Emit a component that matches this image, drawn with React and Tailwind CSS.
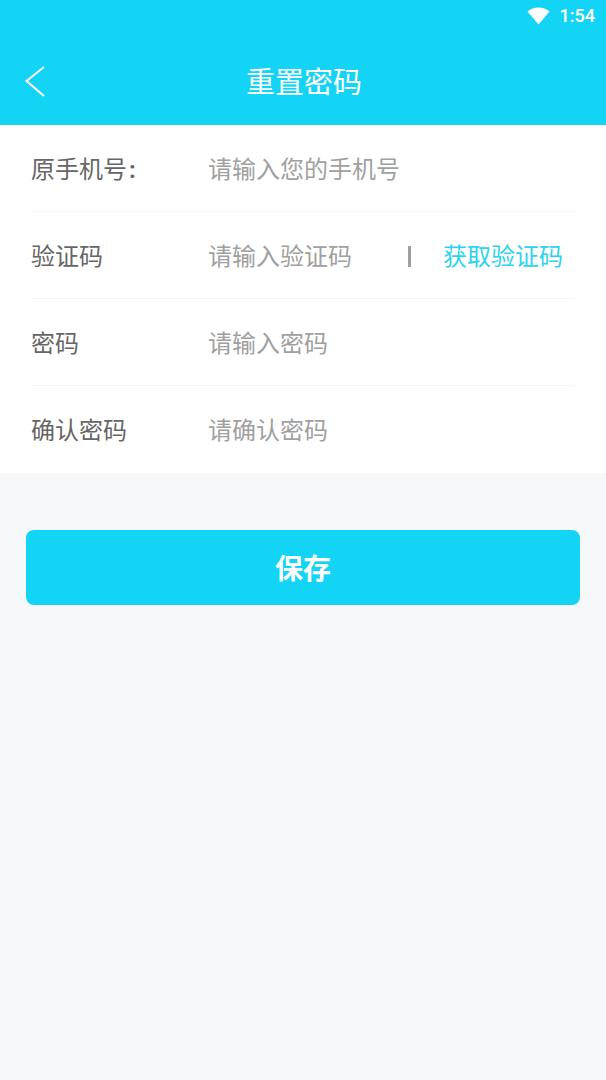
const font = "font-['Roboto','Noto_Sans_CJK_SC',sans-serif]";

function Row({ label, hint, last, children }) {
  return (
    <div className="px-[31px] bg-white">
      <div className={`h-[87px] pt-[3px] flex items-center border-b ${last ? "border-transparent" : "border-[#f5f5f6]"}`}>
        <div className="w-[178px] text-[24px] text-[#666666] leading-none">{label}</div>
        <div className="flex-1 text-[24px] text-[#a0a0a0] leading-none -ml-px">{hint}</div>
        {children}
      </div>
    </div>
  );
}

export default function App() {
  return (
    <div className={`${font} min-h-[1080px] bg-[#f7f8fa]`}>
      <div className="bg-[#13d4f4] h-[125px]">
        <div className="h-[32px] flex items-center justify-end gap-[10px] pr-[11px] text-white">
          <svg className="mb-[1px]" width="23" height="18" viewBox="0 0 23 18">
            <path d="M0.5 4.5 C6.5 -0.8 16.5 -0.8 22.5 4.5 L11.5 17.5 Z" fill="#fff" />
          </svg>
          <span className="text-[18px] font-medium leading-none font-['Roboto',sans-serif]">1:54</span>
        </div>
        <div className="relative h-[93px] pt-[10px] flex items-center justify-center">
          <svg className="absolute left-[24px] top-[33px]" width="22" height="32" viewBox="0 0 22 32" fill="none">
            <path d="M20 2 L2.5 16 L20 31" stroke="#fff" strokeWidth="2" />
          </svg>
          <span className="text-[29px] text-white leading-none ml-[2px]">重置密码</span>
        </div>
      </div>

      <Row label={<>原手机号<span className="ml-[2px] font-bold">:</span></>} hint="请输入您的手机号" />
      <Row label="验证码" hint="请输入验证码">
        <div className="w-[3px] h-[21px] bg-[#a0a0a0]" />
        <div className="ml-[32px] mr-[12px] text-[24px] text-[#2dd3ee] leading-none">获取验证码</div>
      </Row>
      <Row label="密码" hint="请输入密码" />
      <Row label="确认密码" hint="请确认密码" last />

      <div className="px-[26px] pt-[57px]">
        <button className="w-full h-[75px] pt-[4px] rounded-[8px] bg-[#13d4f4] text-white text-[28px] font-bold leading-none">
          保存
        </button>
      </div>
    </div>
  );
}
